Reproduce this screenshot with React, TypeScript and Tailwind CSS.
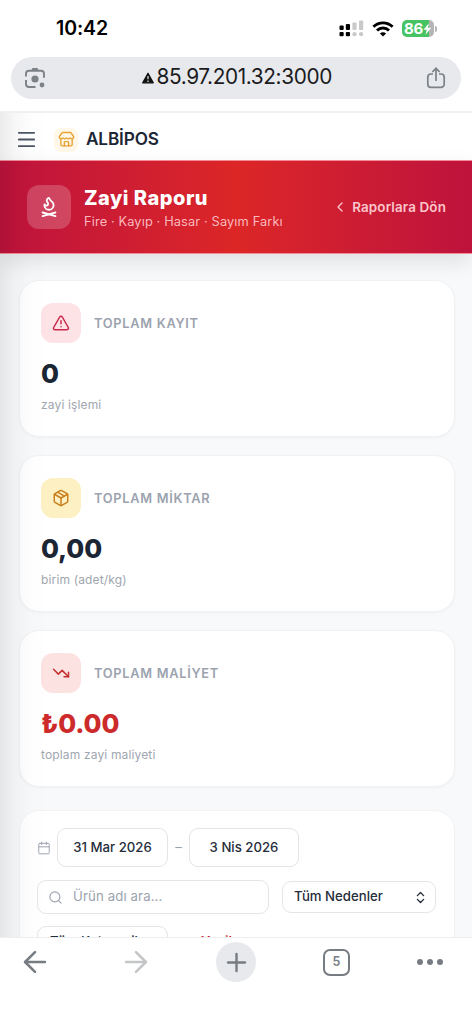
import type { ReactNode } from "react";
import {
  ArrowLeft,
  ArrowRight,
  Calendar,
  ChevronLeft,
  ChevronsUpDown,
  FlameKindling,
  Menu,
  Package,
  Plus,
  RotateCw,
  Search,
  Store,
  TrendingDown,
  TriangleAlert,
} from "lucide-react";

type Stat = {
  label: string;
  value: string;
  hint: string;
  icon: ReactNode;
  box: string;
  color: string;
};

const stats: Stat[] = [
  {
    label: "TOPLAM KAYIT",
    value: "0",
    hint: "zayi işlemi",
    icon: <TriangleAlert size={18} />,
    box: "bg-[#fde2e6] text-[#c9274c]",
    color: "text-[#1c2533]",
  },
  {
    label: "TOPLAM MİKTAR",
    value: "0,00",
    hint: "birim (adet/kg)",
    icon: <Package size={18} />,
    box: "bg-[#fdf0c3] text-[#c9801c]",
    color: "text-[#1c2533]",
  },
  {
    label: "TOPLAM MALİYET",
    value: "₺0.00",
    hint: "toplam zayi maliyeti",
    icon: <TrendingDown size={18} />,
    box: "bg-[#fde2e2] text-[#c53030]",
    color: "text-[#cd2b2b]",
  },
];

function StatusBar() {
  return (
    <div className="flex h-[57px] items-center justify-between pl-14 pr-[35px]">
      <span className="text-[19.5px] leading-none font-semibold tracking-[-0.1px] text-black">10:42</span>
      <div className="flex items-center">
        <svg width="25" height="17" viewBox="0 0 25 17">
          <g fill="#000">
            <rect x="0.5" y="5.5" width="4.2" height="4.5" rx="1" />
            <rect x="6.8" y="4" width="4.2" height="6" rx="1" />
            <rect x="0.5" y="12" width="4.2" height="4.2" rx="1" />
            <rect x="6.8" y="12" width="4.2" height="4.2" rx="1" />
          </g>
          <g fill="#c9c9c9">
            <rect x="13.4" y="2.5" width="4.2" height="7.5" rx="1" />
            <rect x="20" y="0.5" width="4.2" height="9.5" rx="1" />
            <rect x="13.4" y="12" width="4.2" height="4.2" rx="2" />
            <rect x="20" y="12" width="4.2" height="4.2" rx="2" />
          </g>
        </svg>
        <svg className="ml-2" width="22" height="16" viewBox="0 0 22 16" fill="none" stroke="#000" strokeWidth="2.9">
          <path d="M1.4 5.8a13.6 13.6 0 0 1 19.2 0" />
          <path d="M5 9.5a8.5 8.5 0 0 1 12 0" />
          <path d="M11 15.6 7.9 12.5a4.4 4.4 0 0 1 6.2 0z" fill="#000" stroke="none" />
        </svg>
        <div className="ml-2 flex h-[17px] w-[32px] items-center rounded-[5px] bg-[linear-gradient(90deg,#46c463_84%,#b5b5b5_84%)] pl-[2px]">
          <span className="text-[15px] leading-none font-bold tracking-[-0.3px] text-white">86</span>
          <svg width="9" height="12" viewBox="0 0 10 13" fill="#fff">
            <path d="M6.5 0 0.5 7.4h3.6L2.8 13 9.3 5.2H5.6z" />
          </svg>
        </div>
        <div className="ml-px h-[6px] w-[2px] rounded-r-full bg-[#b5b5b5]" />
      </div>
    </div>
  );
}

function AddressBar() {
  return (
    <div className="mx-[11px] flex h-[42px] items-center justify-between rounded-full bg-[#e8e9ed] pr-[15px] pl-[13px]">
      <svg width="22" height="22" viewBox="0 0 22 22" fill="none" stroke="#7d8287" strokeWidth="1.9">
        <path d="M2 9.5V6.8a3 3 0 0 1 3-3h12a3 3 0 0 1 3 3v4M2 13v4a3 3 0 0 0 3 3h6.5" />
        <path d="M7.3 3.8 8.4 1h5.2l1.1 2.8z" fill="#7d8287" stroke="none" />
        <circle cx="11" cy="12" r="3.6" fill="#7d8287" stroke="none" />
        <circle cx="18" cy="18" r="2.4" fill="#7d8287" stroke="none" />
      </svg>
      <div className="flex items-center gap-[3px] pl-1">
        <svg width="12" height="12" viewBox="0 0 12 12">
          <path d="M6 1.2 11.3 10.8H.7z" fill="#111" stroke="#111" strokeWidth="1.2" strokeLinejoin="round" />
          <path d="M6 4v3.3M6 8.5v1.4" stroke="#e8e9ed" strokeWidth="1.2" />
        </svg>
        <span className="w-[178px] pb-px text-[20.8px] leading-none tracking-[-0.38px] whitespace-nowrap text-[#1b1b1d]">
          85.97.201.32:3000
        </span>
      </div>
      <svg width="20" height="22" viewBox="0 0 20 22" fill="none" stroke="#7d8287" strokeWidth="1.7">
        <path d="M7 7H5a3.2 3.2 0 0 0-3.2 3.2v7A3.2 3.2 0 0 0 5 20.4h10a3.2 3.2 0 0 0 3.2-3.2v-7A3.2 3.2 0 0 0 15 7h-2" />
        <path d="M10 14V1.5M6.3 5 10 1.3 13.7 5" />
      </svg>
    </div>
  );
}

function StatCard({ stat }: { stat: Stat }) {
  return (
    <div className="h-[157px] rounded-[20px] border border-[#f1f2f4] bg-white px-[21px] pt-[22px] shadow-[0_1px_3px_rgba(0,0,0,0.04)]">
      <div className="flex items-center gap-[13px]">
        <div className={`flex size-[40px] items-center justify-center rounded-[12px] ${stat.box}`}>{stat.icon}</div>
        <span className="pt-px text-[12.8px] leading-5 font-semibold tracking-[0.72px] text-[#9ca3af]">{stat.label}</span>
      </div>
      <p className={`mt-[15px] text-[26px] leading-8 font-extrabold tracking-[-0.1px] ${stat.color}`}>{stat.value}</p>
      <p className="mt-[7px] text-[12px] leading-4 tracking-[0.15px] text-[#a0a6b0]">{stat.hint}</p>
    </div>
  );
}

function Filters() {
  return (
    <div className="mt-[23px] h-[200px] rounded-[20px] border border-[#f1f2f4] bg-white pt-[17px] pr-[18px] pl-[17px] text-[13.2px] font-medium text-[#252d3a]">
      <div className="flex items-center">
        <Calendar size={14} strokeWidth={1.7} className="text-[#9ca3af]" />
        <div className="ml-[6px] flex h-[39px] w-[111px] items-center justify-center rounded-[9px] border border-[#e3e5e9] pt-px">31 Mar 2026</div>
        <span className="w-[21px] text-center font-normal text-[#9ca3af]">–</span>
        <div className="flex h-[39px] w-[110px] items-center justify-center rounded-[9px] border border-[#e3e5e9] pt-px">3 Nis 2026</div>
      </div>
      <div className="mt-[13px] flex items-center gap-[13px]">
        <div className="flex h-[34px] w-[232px] items-center gap-[10px] rounded-[9px] border border-[#e3e5e9] pl-[10px]">
          <Search size={15} strokeWidth={1.8} className="text-[#9ca3af]" />
          <span className="font-normal tracking-[0.12px] text-[#9ca3af]">Ürün adı ara...</span>
        </div>
        <div className="flex h-[32px] w-[154px] items-center justify-between rounded-[9px] border border-[#e3e5e9] pr-[7px] pl-[11px]">
          Tüm Nedenler
          <ChevronsUpDown size={15} strokeWidth={2.2} />
        </div>
      </div>
      <div className="mt-[12px] flex">
        <div className="flex h-[32px] w-[131px] items-center justify-between rounded-[9px] border border-[#e3e5e9] pr-[7px] pl-[12px] whitespace-nowrap">
          Tüm Kategoriler
          <ChevronsUpDown size={15} strokeWidth={2.2} />
        </div>
        <span className="ml-[15px] flex h-[32px] items-center gap-[5px] font-semibold text-[#cd2b2b]">
          <RotateCw size={13} strokeWidth={2.4} />
          Yenile
        </span>
      </div>
    </div>
  );
}

function BrowserNav() {
  return (
    <div className="flex h-[87px] items-start border-t border-[#eceef0] bg-white pl-[18px] text-[#777c82]">
      <ArrowLeft size={34} strokeWidth={1.8} className="mt-[7px]" />
      <ArrowRight size={34} strokeWidth={1.8} className="mt-[7px] ml-[67px] text-[#c4c5c7]" />
      <div className="mt-[4px] ml-[63px] flex size-10 items-center justify-center rounded-full bg-[#e8e9ed]">
        <Plus size={29} />
      </div>
      <div className="mt-[11px] ml-[67px] flex size-[27px] items-center justify-center rounded-[7px] border-2 border-[#777c82] text-[12.5px] font-semibold">
        5
      </div>
      <div className="mt-[21px] ml-[67px] flex gap-[4.5px]">
        <i className="size-[5.5px] rounded-full bg-[#777c82]" />
        <i className="size-[5.5px] rounded-full bg-[#777c82]" />
        <i className="size-[5.5px] rounded-full bg-[#777c82]" />
      </div>
    </div>
  );
}

export default function App() {
  return (
    <div className="flex h-[1024px] w-[472px] flex-col overflow-hidden bg-white font-['Inter','Liberation_Sans',sans-serif]">
      <div className="h-[113px] shrink-0 border-b-2 border-[#f0f0f1]">
        <StatusBar />
        <AddressBar />
      </div>

      <div className="relative flex min-h-0 flex-1 flex-col overflow-hidden">
        <header className="flex h-[47px] shrink-0 items-center bg-white pt-[6px] pl-[15px]">
          <Menu size={23} strokeWidth={1.9} className="text-[#4b5563]" />
          <div className="ml-[16px] flex size-6 items-center justify-center rounded-[7px] bg-[#fff7e8]">
            <Store size={17} className="text-[#e9a436]" />
          </div>
          <span className="ml-[8px] pb-px text-[17.2px] font-semibold tracking-[-0.15px] text-[#1d2635]">ALBİPOS</span>
        </header>

        <section className="z-10 flex h-[94px] shrink-0 items-center border-y border-[#f58b98] bg-linear-to-r from-[#be123c] via-[#dc2626] to-[#be123c] pr-[26px] pl-[27px] shadow-[0_8px_20px_rgba(0,0,0,0.1)]">
          <div className="flex size-[44px] items-center justify-center rounded-[12px] bg-white/20 text-white">
            <FlameKindling size={22} />
          </div>
          <div className="ml-[13px] flex-1 pt-[4px]">
            <h1 className="text-[20px] leading-6 font-extrabold tracking-[0.5px] text-white">Zayi Raporu</h1>
            <p className="mt-[2px] text-[12.8px] leading-5 tracking-[0.13px] text-[#f9b8bd]">Fire · Kayıp · Hasar · Sayım Farkı</p>
          </div>
          <a className="flex items-center gap-[4px] text-[13.4px] font-semibold tracking-[0.15px] text-[#fbc4ca]">
            <ChevronLeft size={16} />
            Raporlara Dön
          </a>
        </section>

        <main className="flex-1 bg-[#f8f9fb] pt-[26px] pr-[17px] pl-[19px]">
          <div className="flex flex-col gap-[18px]">
            {stats.map((stat) => (
              <StatCard key={stat.label} stat={stat} />
            ))}
          </div>
          <Filters />
        </main>

        {/* shadow cast by the closed drawer */}
        <div className="pointer-events-none absolute inset-y-0 left-0 z-20 w-[50px] bg-[linear-gradient(90deg,rgba(0,0,0,0.08),rgba(0,0,0,0.03)_30%,rgba(0,0,0,0.008)_60%,transparent)]" />
      </div>

      <BrowserNav />
    </div>
  );
}
